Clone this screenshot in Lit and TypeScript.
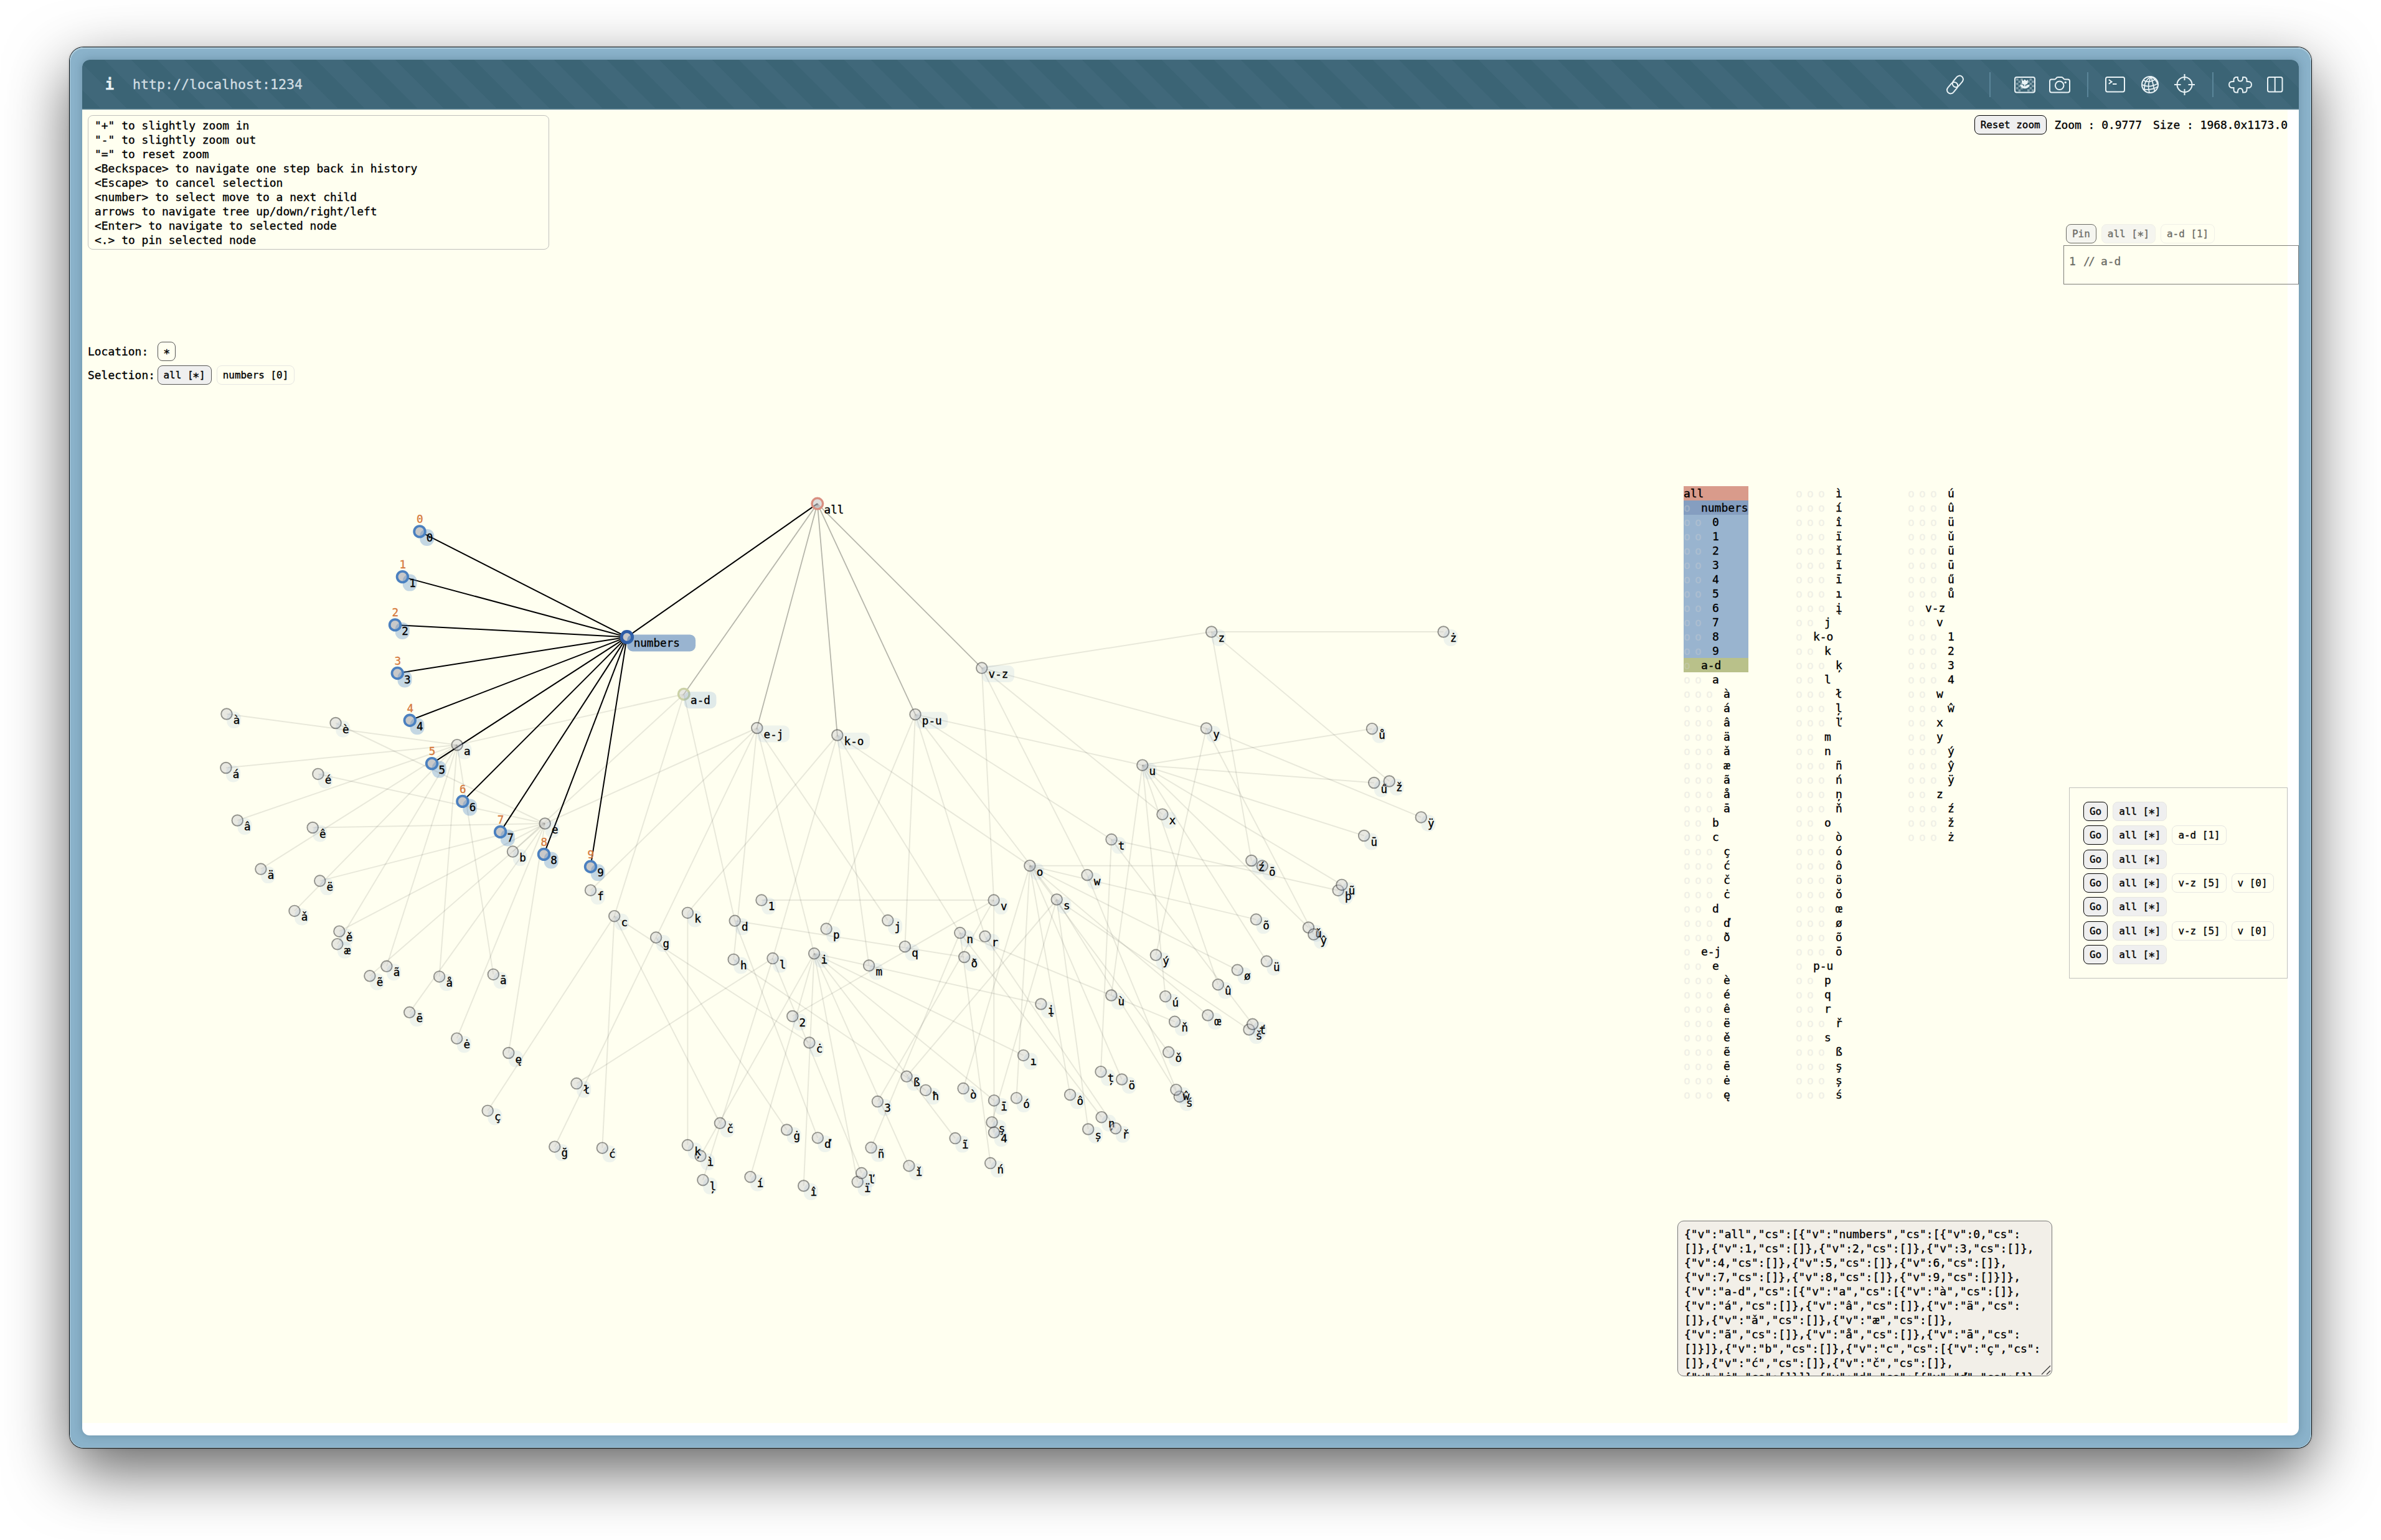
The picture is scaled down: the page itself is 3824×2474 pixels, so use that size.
import { LitElement, html, svg, css } from "lit";
import { customElement } from "lit/decorators.js";
import { classMap } from "lit/directives/class-map.js";

interface TreeNode {
  v: string;
  x: number;
  y: number;
  kind: string;
  cs: TreeNode[];
}

const n = (v: string, x: number, y: number, cs: TreeNode[] = [], kind = "plain"): TreeNode => ({ v, x, y, cs, kind });
const d = (v: string, x: number, y: number): TreeNode => n(v, x, y, [], "digit");

const tree: TreeNode = n("all", 1312.8, 809.1, [
  n("numbers", 1006.9, 1023.4, [
    d("0", 674, 853.9), d("1", 646.4, 926.6), d("2", 634.5, 1003.9), d("3", 638.3, 1081.5),
    d("4", 658.3, 1157.3), d("5", 693.6, 1226.6), d("6", 742.9, 1287.4), d("7", 803.6, 1336.4),
    d("8", 873.5, 1372.4), d("9", 948.5, 1392.2),
  ], "selected"),
  n("a-d", 1098.3, 1115.2, [
    n("a", 734.2, 1196.7, [
      n("à", 364, 1147), n("á", 362.9, 1233.5), n("â", 381.3, 1318), n("ä", 418.9, 1396.1),
      n("ǎ", 473, 1463.4), n("æ", 541.8, 1516.7), n("ã", 620.9, 1552.3), n("å", 705.6, 1568.9),
      n("ā", 792.3, 1565.4),
    ]),
    n("b", 823.5, 1368.1),
    n("c", 986.7, 1471.7, [
      n("ç", 783.2, 1784.4), n("ć", 967.3, 1844.2), n("č", 1156.4, 1804.3), n("ċ", 1299.9, 1675),
    ]),
    n("d", 1180.2, 1479.3, [n("ď", 1313.3, 1827.9), n("ð", 1548.7, 1537.5)]),
  ], "pinned"),
  n("e-j", 1215.8, 1169.5, [
    n("e", 875.2, 1323, [
      n("è", 539.1, 1161.5), n("é", 510.9, 1243.4), n("ê", 502.2, 1329.5), n("ë", 513.8, 1415.1),
      n("ě", 544.9, 1496.2), n("ẽ", 593.9, 1567.8), n("ē", 657.7, 1626.3), n("ė", 733.7, 1668.2),
      n("ę", 816.8, 1691.5),
    ]),
    n("f", 948.5, 1430.2),
    n("g", 1053.6, 1506.1, [n("ğ", 890.8, 1842.2), n("ġ", 1263.6, 1815)]),
    n("h", 1178.2, 1541.4, [n("ħ", 1486.7, 1751.4)]),
    n("i", 1307.6, 1531.8, [
      n("ì", 1125, 1857.1), n("í", 1205, 1890.7), n("î", 1290.7, 1905), n("ï", 1377.2, 1898.6),
      n("ǐ", 1459.9, 1872.9), n("ĩ", 1534.1, 1828.6), n("ī", 1596.5, 1767.9), n("ı", 1643.6, 1695.4),
      n("į", 1671.9, 1613),
    ]),
    n("j", 1425.8, 1478.6),
  ]),
  n("k-o", 1344.8, 1181, [
    n("k", 1104.4, 1466.4, [n("ķ", 1104.4, 1839.6)]),
    n("l", 1241, 1539.6, [n("ł", 926, 1740.6), n("ļ", 1128.9, 1895.7), n("ľ", 1383.7, 1884.6)]),
    n("m", 1395.6, 1551.1),
    n("n", 1541.8, 1498.6, [
      n("ñ", 1399, 1843.6), n("ń", 1590.7, 1868.6), n("ņ", 1769.1, 1794.7), n("ň", 1886.6, 1641.3),
    ]),
    n("o", 1653.9, 1390.7, [
      n("ò", 1547.1, 1748.6), n("ó", 1632.5, 1763.9), n("ô", 1718.6, 1758.7), n("ö", 1801.7, 1734),
      n("ǒ", 1876.7, 1690.3), n("œ", 1939.8, 1631), n("ø", 1987.3, 1558.3), n("õ", 2017.4, 1477.1),
      n("ō", 2027.3, 1391.1),
    ]),
  ]),
  n("p-u", 1470, 1147.7, [
    n("p", 1327.1, 1492.1),
    n("q", 1453.4, 1520.7),
    n("r", 1582, 1504.3, [n("ř", 1791.7, 1812.7)]),
    n("s", 1697.2, 1445, [
      n("ß", 1456.1, 1729.3), n("ş", 1593, 1802.9), n("ș", 1747.7, 1814), n("ś", 1894.3, 1761.7),
      n("š", 2006, 1654),
    ]),
    n("t", 1785, 1348.6, [n("þ", 2149.2, 1430.4), n("ț", 1768, 1721.7), n("ť", 2011.7, 1645.3)]),
    n("u", 1834.8, 1229.2, [
      n("ù", 1784.8, 1599), n("ú", 1871.7, 1600.7), n("û", 1956.3, 1581.7), n("ü", 2034.3, 1544.3),
      n("ǔ", 2101.5, 1490), n("ũ", 2155, 1421.4), n("ū", 2190.7, 1342.5), n("ű", 2206.8, 1257.5),
      n("ů", 2203.5, 1170.7),
    ]),
  ]),
  n("v-z", 1576.8, 1073.1, [
    n("v", 1596.1, 1446.1, [
      n("1", 1223, 1446.1), n("2", 1272.8, 1632.5), n("3", 1409.4, 1769.6), n("4", 1596.5, 1819.3),
    ]),
    n("w", 1746, 1405.7, [n("ŵ", 1888.9, 1750.7)]),
    n("x", 1866.9, 1308.2),
    n("y", 1937.4, 1170, [n("ý", 1856.4, 1534.3), n("ŷ", 2109.8, 1501.1), n("ÿ", 2282.3, 1312.9)]),
    n("z", 1945.7, 1015, [n("ź", 2009.9, 1382.5), n("ž", 2231.3, 1255), n("ż", 2318.3, 1015)]),
  ]),
], "root");

interface FlatNode {
  node: TreeNode;
  parent?: TreeNode;
  depth: number;
}

const flatten = (node: TreeNode, depth = 0, parent?: TreeNode): FlatNode[] => [
  { node, parent, depth },
  ...node.cs.flatMap((c) => flatten(c, depth + 1, node)),
];

const flat = flatten(tree);
const COLUMN_STRIDE = 50;
const COLUMN_ROWS = 43;
const columns = [0, 1, 2].map((i) => flat.slice(i * COLUMN_STRIDE, i * COLUMN_STRIDE + COLUMN_ROWS));

const MONO = css`"DejaVu Sans Mono", "Liberation Mono", monospace`;

@customElement("node-graph")
class NodeGraph extends LitElement {
  static styles = css`
    :host { display: block; }
    svg { display: block; width: 3560px; height: 2130px; }
    text { font-family: ${MONO}; font-size: 17.6px; fill: #000; stroke: #000; stroke-width: 0.35; }
    .edge { stroke: #000; stroke-width: 2; stroke-opacity: 0.09; }
    .edge.near { stroke-opacity: 0.29; stroke-width: 1.8; }
    .edge.active { stroke-opacity: 1; }
    .dot { fill: rgba(200, 200, 206, 0.42); stroke: rgba(0, 0, 0, 0.4); stroke-width: 1.9; }
    .dot.root { fill: rgba(200, 200, 206, 0.6); stroke: #d98f80; stroke-width: 3.4; }
    .dot.pinned { stroke: #cbd1a5; stroke-width: 3.4; }
    .dot.digit { fill: #c8c8c8; stroke: #4b80bf; stroke-width: 3.8; }
    .dot.selected { fill: #c8c8c8; stroke: #2e5ca6; stroke-width: 5; }
    .plate { fill: rgba(70, 130, 200, 0.095); }
    .plate.root { fill: none; }
    .plate.pinned { fill: rgba(70, 130, 200, 0.17); }
    .plate.digit { fill: rgba(70, 130, 200, 0.32); }
    .plate.selected { fill: rgba(51, 105, 175, 0.5); }
    .hint { fill: #d67a3e; stroke: #d67a3e; text-anchor: middle; }
  `;

  render() {
    return html`<svg viewBox="132 176 3560 2130">
      ${flat.filter((f) => f.parent).map(({ node, parent }) => {
        const active = node.kind === "digit" || node.kind === "selected";
        const near = !active && parent === tree;
        return svg`<line class=${`edge${active ? " active" : near ? " near" : ""}`}
          x1=${parent!.x} y1=${parent!.y} x2=${node.x} y2=${node.y}></line>`;
      })}
      ${flat.map(({ node }) => svg`
        <circle class=${`dot ${node.kind}`} cx=${node.x} cy=${node.y} r="8.8"></circle>
        <rect class=${`plate ${node.kind}`} x=${node.x + 0.3} y=${node.y - 4}
          width=${8.4 + 14.5 * node.v.length} height="27" rx=${node.v.length > 1 ? 9 : 11}></rect>
        <text x=${node.x + 10.8} y=${node.y + 16}>${node.v}</text>`)}
      ${flat.filter((f) => f.node.kind === "digit").map(({ node }) => svg`
        <text class="hint" x=${node.x + 0.4} y=${node.y - 13.6}>${node.v}</text>`)}
    </svg>`;
  }
}

@customElement("node-list")
class NodeList3 extends LitElement {
  static styles = css`
    :host { display: flex; font: 17.94px/23px ${MONO}; }
    .column { width: 180px; }
    .inner { display: flex; flex-direction: column; width: 104px; }
    .row { display: flex; height: 23px; white-space: pre; }
    .mark { width: 18px; color: lightgray; opacity: 0.34; }
    .name { margin-left: 10px; }
    .row.root .name { margin-left: 0; }
    .row.root { background: #d99b8b; }
    .row.selected { background: #859ec0; }
    .row.digit { background: #99b4cf; }
    .row.pinned { background: #b9c18a; }
  `;

  render() {
    return columns.map((rows) => html`
      <div class="column"><div class="inner">
        ${rows.map(({ node, depth }) => html`
          <div class=${`row ${node.kind}`}>${Array.from({ length: depth }, () => html`<span class="mark">o</span>`)}<span class="name">${node.v}</span></div>`)}
      </div></div>`);
  }
}

@customElement("path-chips")
class PathChips extends LitElement {
  static properties = { action: {}, parts: { attribute: false }, current: { type: Boolean } };
  declare action: string;
  declare parts: string[];
  declare current: boolean;

  static styles = css`
    :host { display: flex; gap: 8px; }
    .chip {
      box-sizing: border-box; height: 31px; padding: 1px 9px 0; border: 1px solid #e6e6e2;
      border-radius: 8px; font: 15.95px/27px ${MONO}; white-space: pre; color: #000;
    }
    .first { background: #efefef; }
    .action { border-color: #000; background: #efefef; }
    .current { border-color: #555; }
    .star {
      display: inline-block; height: 27px; line-height: 27px; vertical-align: top;
      transform: translateY(3px) scale(1.15);
    }
  `;

  private label(text: string) {
    const at = text.indexOf("*");
    return at < 0 ? text : html`${text.slice(0, at)}<span class="star">*</span>${text.slice(at + 1)}`;
  }

  render() {
    return html`
      ${this.action ? html`<div class="chip action">${this.action}</div>` : null}
      ${(this.parts ?? []).map((p, i) => html`
        <div class=${classMap({ chip: true, first: i === 0 && p.length > 1, current: i === 0 && this.current })}>${this.label(p)}</div>`)}`;
  }
}

@customElement("title-bar")
class TitleBar extends LitElement {
  static styles = css`
    :host {
      display: flex; align-items: center; box-sizing: border-box; height: 80px; padding: 0 25px 0 36px;
      border-radius: 12px 12px 0 0; color: #e9f2f5;
      background: repeating-linear-gradient(45deg, #3b6475 0 22px, #40687a 22px 52px, #3b6475 52px 60px);
      box-shadow: inset 0 -2px #4c7486;
    }
    .info { font: bold 24px/40px ${MONO}; width: 16px; text-align: center; }
    .url { font: 21.6px/40px ${MONO}; color: #d2dee3; margin-left: 29px; flex: 1; }
    svg { display: block; height: 40px; fill: none; stroke: currentColor; stroke-width: 2; flex: none; }
    .solid { fill: currentColor; stroke: none; }
    .faint { fill: currentColor; stroke: none; opacity: 0.4; }
    .sep { width: 2px; height: 40px; background: #5a8599; }
    .g22 { margin-left: 22px; } .g24 { margin-left: 24px; } .g25 { margin-left: 25px; }
    .g26 { margin-left: 26px; } .g27 { margin-left: 27px; } .g38 { margin-left: 38px; }
    .g40 { margin-left: 40px; } .g28 { margin-left: 28px; }
  `;

  render() {
    const checks = [];
    for (let r = 0; r < 6; r++)
      for (let c = 0; c < 8; c++)
        if ((r + c) % 2 === 0 && (c < 3 || c > 4)) checks.push(svg`<rect class="faint" x=${3 + c * 3.6} y=${10 + r * 3.5} width="3.6" height="3.5"></rect>`);
    return html`
      <span class="info">i</span><span class="url">http://localhost:1234</span>
      <svg width="30" viewBox="0 0 30 40"><g transform="rotate(-50 15 20)">
        <rect x="-2" y="14.2" width="20.500" height="11.600" rx="5.800"></rect>
        <rect x="11.500" y="14.2" width="20.500" height="11.600" rx="5.800"></rect></g></svg>
      <span class="sep g40"></span>
      <svg class="g38" width="34" viewBox="0 0 34 40"><rect x="1" y="8" width="32" height="24.4" rx="3"></rect>${checks}
        <path class="solid" d="M12 12l2.4 2 2.4-2.6 2.6 2.6 2.4-2v4q0 3.6-4 4v3.200q2-3.600 7-3.200-1 5.600-6.500 6.200h-2.600q-5.200-.6-6.400-6.200 5-.4 6.700 3.200v-3.200q-4-.4-4-4z"></path></svg>
      <svg class="g22" width="34" viewBox="0 0 34 40">
        <path d="M4 11.400h4.800q1.200 0 2-1l1-1.200q.8-1.200 2.200-1.200h6q1.400 0 2.200 1.200l1 1.200q.8 1 2 1H30q3 0 3 3v15q0 3-3 3H4q-3 0-3-3v-15q0-3 3-3z"></path>
        <circle cx="16.700" cy="21.300" r="6.800"></circle><circle class="solid" cx="26.200" cy="16.400" r="1.700"></circle></svg>
      <span class="sep g27"></span>
      <svg class="g27" width="32" viewBox="0 0 32 40"><rect x="1" y="8" width="30" height="23.400" rx="2.600"></rect>
        <path d="M5.800 12l4.700 3.400-4.700 3.400M12 19h6.500"></path></svg>
      <svg class="g26" width="28" viewBox="0 0 28 40"><circle cx="14" cy="20" r="13"></circle>
        <path stroke-width="1.700" d="M16 7Q3 14 5.500 29.500M16 7Q9 18 13 33M16 7Q19 20 21.500 30.500M16 7Q25 13 26.500 20M3.500 13Q12 18 23.500 11M1 20Q13 26 27 18M3 27Q14 30 26 23.500"></path></svg>
      <svg class="g25" width="33" viewBox="0 0 33 40"><circle cx="16.500" cy="20" r="12"></circle>
        <path d="M16.500 3v10M16.500 27v10M0 20h10.500M22.500 20H33"></path></svg>
      <span class="sep g28"></span>
      <svg class="g24" width="38" viewBox="0 0 38 40">
        <path d="M8.500 15v-2.500q0-4.500 4.500-4.500h1.800q0 6.500 4.200 6.500t4.200-6.500H25q4.500 0 4.500 4.500V15q7.500-.6 7.500 5t-7.500 5v3q0 4.500-4.500 4.500h-1.800q0-6.500-4.200-6.500t-4.200 6.500H13q-4.500 0-4.500-4.500v-3q-7.500.6-7.500-5t7.500-5z"></path></svg>
      <svg class="g24" width="26" viewBox="0 0 26 40"><rect x="1" y="8" width="23.500" height="23.400" rx="2.600"></rect>
        <path d="M12.700 8v23.400"></path></svg>`;
  }
}

const helpLines = [
  `"+" to slightly zoom in`,
  `"-" to slightly zoom out`,
  `"=" to reset zoom`,
  `<Beckspace> to navigate one step back in history`,
  `<Escape> to cancel selection`,
  `<number> to select move to a next child`,
  `arrows to navigate tree up/down/right/left`,
  `<Enter> to navigate to selected node`,
  `<.> to pin selected node`,
];

const jsonLines = [
  `{"v":"all","cs":[{"v":"numbers","cs":[{"v":0,"cs":`,
  `[]},{"v":1,"cs":[]},{"v":2,"cs":[]},{"v":3,"cs":[]},`,
  `{"v":4,"cs":[]},{"v":5,"cs":[]},{"v":6,"cs":[]},`,
  `{"v":7,"cs":[]},{"v":8,"cs":[]},{"v":9,"cs":[]}]},`,
  `{"v":"a-d","cs":[{"v":"a","cs":[{"v":"à","cs":[]},`,
  `{"v":"á","cs":[]},{"v":"â","cs":[]},{"v":"ä","cs":`,
  `[]},{"v":"ǎ","cs":[]},{"v":"æ","cs":[]},`,
  `{"v":"ã","cs":[]},{"v":"å","cs":[]},{"v":"ā","cs":`,
  `[]}]},{"v":"b","cs":[]},{"v":"c","cs":[{"v":"ç","cs":`,
  `[]},{"v":"ć","cs":[]},{"v":"č","cs":[]},`,
  `{"v":"ċ","cs":[]}]},{"v":"d","cs":[{"v":"ď","cs":[]}`,
];

const history = [
  ["all [*]"],
  ["all [*]", "a-d [1]"],
  ["all [*]"],
  ["all [*]", "v-z [5]", "v [0]"],
  ["all [*]"],
  ["all [*]", "v-z [5]", "v [0]"],
  ["all [*]"],
];

@customElement("app-root")
class AppRoot extends LitElement {
  static styles = css`
    :host {
      display: block; box-sizing: border-box; width: 3824px; height: 2474px; padding: 76px 112px 148px;
      background: #fff; overflow: hidden; font: 17.94px/23px ${MONO}; color: #000;
      -webkit-text-stroke: 0.35px;
    }
    .window {
      box-sizing: border-box; width: 3600px; height: 2250px; padding: 20px; border-radius: 22px;
      background: #8ab2ca;
      box-shadow: inset 0 0 0 1px #a9c9da, inset 0 1px 1px 1px #b5d3e2, 0 0 0 1px #0a0f12,
        0 0 4px rgba(0, 0, 0, 0.3), 0 36px 100px rgba(0, 0, 0, 0.62);
    }
    .page {
      width: 3560px; height: 2210px; border-radius: 12px; overflow: hidden;
      box-shadow: 0 0 14px rgba(30, 60, 80, 0.28);
    }
    .canvas {
      position: relative; display: grid; grid-template-columns: 2562px 620px 378px; height: 2130px;
      background: #fff linear-gradient(ivory, ivory) no-repeat 0 0 / 3542px 2110px;
    }
    .graph { position: absolute; inset: 0; }
    .left, .middle, .right { display: flex; flex-direction: column; }
    .left { padding: 9px 0 0 9px; }
    .help {
      box-sizing: border-box; width: 741px; height: 216px; padding: 3.500px 10px; border: 1px solid #c0c0bc;
      border-radius: 8px; white-space: pre; margin-bottom: 148px;
    }
    .path { display: flex; align-items: center; height: 31px; margin-bottom: 7px; }
    .path .label { width: 111.500px; }
    .list { padding: 605px 0 0 10px; height: 990px; }
    .json {
      position: relative; box-sizing: border-box; width: 602px; height: 250px; margin-top: 190px;
      padding: 9px 10px; border: 1px solid #777; border-radius: 10px; background: #f2efe8;
      overflow: hidden; white-space: pre;
    }
    .grip { position: absolute; right: 1px; bottom: 1px; width: 16px; height: 16px; stroke: #333; stroke-width: 1.300; fill: none; }
    .readout { display: flex; align-self: flex-end; align-items: center; margin: 9px 18px 0 0; white-space: pre; }
    .readout span { margin-left: 13px; }
    .readout span + span { margin-left: 18px; }
    .pins { margin-top: 144px; opacity: 0.58; }
    .pins path-chips { margin-left: 4px; }
    .editor { box-sizing: border-box; height: 63px; margin-top: 3px; padding: 13px 8px; border: 1px solid #222; white-space: pre; }
    .tight { letter-spacing: -3px; margin: 0 1.500px; }
    .history {
      display: flex; flex-direction: column; gap: 7.330px; box-sizing: border-box; width: 351px; height: 307px;
      margin: 808px 0 0 9px; padding: 22px; border: 1px solid #c0c0bc;
    }
  `;

  render() {
    return html`
      <div class="window"><div class="page">
        <title-bar></title-bar>
        <div class="canvas">
          <node-graph class="graph"></node-graph>
          <div class="left">
            <div class="help">${helpLines.map((l) => html`<div>${l}</div>`)}</div>
            <div class="path"><span class="label">Location:</span><path-chips current .parts=${["*"]}></path-chips></div>
            <div class="path"><span class="label">Selection:</span><path-chips current .parts=${["all [*]", "numbers [0]"]}></path-chips></div>
          </div>
          <div class="middle">
            <div class="list"><node-list></node-list></div>
            <div class="json">${jsonLines.map((l) => html`<div>${l}</div>`)}
              <svg class="grip" viewBox="0 0 16 16"><path d="M1 15L15 1M9 15l6-6"></path></svg>
            </div>
          </div>
          <div class="right">
            <div class="readout"><path-chips action="Reset zoom"></path-chips><span>Zoom : 0.9777</span><span>Size : 1968.0x1173.0</span></div>
            <div class="pins">
              <path-chips action="Pin" .parts=${["all [*]", "a-d [1]"]}></path-chips>
              <div class="editor">1 <span class="tight">//</span> a-d</div>
            </div>
            <div class="history">${history.map((h) => html`<path-chips action="Go" .parts=${h}></path-chips>`)}</div>
          </div>
        </div>
      </div></div>`;
  }
}
